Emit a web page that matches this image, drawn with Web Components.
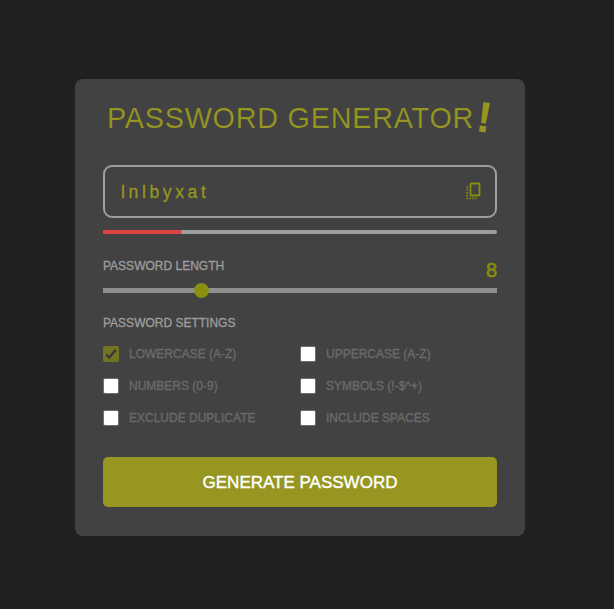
<!DOCTYPE html>
<html lang="en">
<head>
<meta charset="utf-8">
<title>Password Generator</title>
<style>
html,body{margin:0;height:100%}
body{background:#212121;font-family:"Liberation Sans",Arial,sans-serif;color:#969621;overflow:hidden}
</style>
</head>
<body>
<password-generator></password-generator>
<script>
const define = (name, html) => customElements.define(name, class extends HTMLElement {
  constructor() {
    super();
    this.attachShadow({ mode: 'open' }).innerHTML = html;
  }
  connectedCallback() {
    const box = this.shadowRoot.querySelector('.box');
    if (box && !this.hasAttribute('checked')) box.textContent = '';
  }
});

define('card-title', `<style>
:host{display:flex;height:44px;line-height:44px;font-size:30px;letter-spacing:.8px;padding-left:4px;white-space:nowrap}
.t{display:block;width:367px;flex:none;transform:scaleX(.959);transform-origin:0 0;-webkit-text-stroke:.2px #424242}
svg{display:block;margin:4px 0 0 3px;flex:none}
</style><span class="t"><slot></slot></span>
<svg width="14" height="34" viewBox="0 0 14 34"><path d="M6.3 2.2 13 3.1 8.8 23.6 4.2 23ZM2.9 25.4 9.3 26.2 8.5 32.4 2 31.6Z" fill="#969621"/></svg>`);

define('password-field', `<style>
:host{display:flex;box-sizing:border-box;height:53px;margin-top:25px;border:2px solid #9e9e9e;border-radius:9px;align-items:center;justify-content:space-between;padding:1px 14px 0 16px}
span{font-size:17.6px;letter-spacing:3.6px;line-height:24px;-webkit-text-stroke:.3px #969621}
svg{display:block;margin-bottom:2px}
</style><span><slot></slot></span>
<svg width="16" height="18" viewBox="0 0 16 18" fill="none" stroke="#8a8d0d"><rect x="5.5" y="1.5" width="9" height="12" rx="1" stroke-width="1.8"/><path d="M2.2 4.3V17M1.5 16.4H12" stroke-width="1.6" stroke-dasharray="1.6 1.3"/></svg>`);

define('strength-meter', `<style>
:host{display:block;height:4px;margin-top:12px;background:#9e9e9e;border-radius:2px}
div{width:79px;height:4px;border-radius:2px;background:#e04040}
</style><div></div>`);

define('length-slider', `<style>
:host{display:block;margin-top:22px;color:#9e9e9e}
.row{display:flex;justify-content:space-between;height:27px;font-size:12px;line-height:20px}
b{font-weight:400;font-size:20px;line-height:24px;padding-top:2px;color:#8a8d0d;-webkit-text-stroke:.6px #8a8d0d}
.track{height:15px;padding-left:91px;background:linear-gradient(#8f8f8f,#8f8f8f) 0 5px/100% 5px no-repeat}
i{display:block;width:15px;height:15px;border-radius:50%;background:#8a8f12}
span{-webkit-text-stroke:.3px #9e9e9e}
</style><div class="row"><span><slot></slot></span><b>8</b></div><div class="track"><i></i></div>`);

define('settings-group', `<style>
:host{display:block;margin-top:15px}
.h{font-size:12px;line-height:20px;color:#9e9e9e;-webkit-text-stroke:.3px #9e9e9e}
.g{display:grid;grid-template-columns:1fr 1fr;row-gap:16px;margin-top:13px}
</style><div class="h"><slot name="heading"></slot></div><div class="g"><slot></slot></div>`);

define('setting-option', `<style>
:host{display:flex;height:16px;line-height:16px;font-size:12px;color:#6a6a6a;gap:10px;-webkit-text-stroke:0}
.box{box-sizing:border-box;width:16px;height:16px;border:1px solid #6f6f6f;border-radius:2px;background:#fff;flex:none}
:host([checked]) .box{border:0;background:#707520}
svg{display:block}
.l{-webkit-text-stroke:.35px #6a6a6a}
</style><div class="box"><svg width="16" height="16" viewBox="0 0 16 16"><path d="M3.2 8.5 6.2 11.5 12.7 3.9" fill="none" stroke="#383838" stroke-width="2.4"/></svg></div><span class="l"><slot></slot></span>`);

define('generate-button', `<style>
:host{display:block;margin-top:31px}
button{all:unset;box-sizing:border-box;display:block;width:100%;height:50px;padding-top:1px;line-height:50px;border-radius:5px;background:#969621;color:#fff;text-align:center;font-size:17px;-webkit-text-stroke:.4px #fff}
</style><button><slot></slot></button>`);

define('password-generator', `<style>
:host{display:block;padding:79px 89px 0 75px}
main{box-sizing:border-box;width:450px;height:457px;padding:17px 28px 29px;border-radius:8px;background:#424242;box-shadow:0 3px 14px rgba(0,0,0,.06)}
</style><main>
<card-title>PASSWORD GENERATOR</card-title>
<password-field>lnlbyxat</password-field>
<strength-meter></strength-meter>
<length-slider>PASSWORD LENGTH</length-slider>
<settings-group><span slot="heading">PASSWORD SETTINGS</span>
<setting-option checked>LOWERCASE (A-Z)</setting-option>
<setting-option>UPPERCASE (A-Z)</setting-option>
<setting-option>NUMBERS (0-9)</setting-option>
<setting-option>SYMBOLS (!-$^+)</setting-option>
<setting-option>EXCLUDE DUPLICATE</setting-option>
<setting-option>INCLUDE SPACES</setting-option>
</settings-group>
<generate-button>GENERATE PASSWORD</generate-button>
</main>`);
</script>
</body>
</html>
